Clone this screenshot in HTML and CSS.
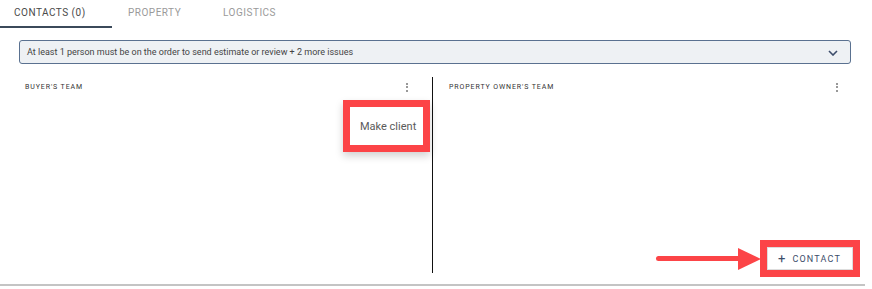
FILE: index.html
```html
<!DOCTYPE html>
<html lang="en">
<head>
    <meta charset="UTF-8">
    <meta name="viewport" content="width=device-width, initial-scale=1.0">
    <title>Order Contacts</title>
    <link rel="stylesheet" href="styles.css">
</head>
<body>
    <div id="order">
        <div class="tabs">
            <div class="tab tab-active">CONTACTS (0)</div>
            <div class="tab">PROPERTY</div>
            <div class="tab">LOGISTICS</div>
        </div>

        <div class="banner">
            <span>At least 1 person must be on the order to send estimate or review + 2 more issues</span>
            <svg class="chevron" width="10" height="6" viewBox="0 0 10 6">
                <path d="M1 1 L5 5 L9 1" fill="none" stroke="#3d4d6b" stroke-width="1.6"/>
            </svg>
        </div>

        <div class="teams">
            <div class="team team-buyer">
                <div class="team-head">
                    <span class="team-title">BUYER'S TEAM</span>
                    <span class="kebab"><i></i><i></i><i></i></span>
                </div>
                <div class="menu-mark">
                    <div class="menu">Make client</div>
                </div>
            </div>
            <div class="team team-owner">
                <div class="team-head">
                    <span class="team-title">PROPERTY OWNER'S TEAM</span>
                    <span class="kebab"><i></i><i></i><i></i></span>
                </div>
                <div class="team-foot">
                    <div class="arrow"><span class="arrow-line"></span><span class="arrow-head"></span></div>
                    <div class="btn-mark">
                        <button class="add-btn"><span class="plus">+</span>CONTACT</button>
                    </div>
                </div>
            </div>
        </div>

        <div class="bottom-line"></div>
    </div>
</body>
</html>
```

FILE: styles.css
```css
body {
    margin: 0;
    font-family: Roboto, "Liberation Sans", Arial, sans-serif;
    background-color: #fff;
}
#order {
    width: 872px;
    height: 289px;
    overflow: hidden;
}
.tabs {
    display: flex;
    height: 28px;
}
.tab {
    box-sizing: border-box;
    height: 28px;
    padding-top: 7px;
    font-size: 10px;
    letter-spacing: 0.5px;
    color: #9a9a9a;
}
.tab:nth-child(1) {
    width: 112px;
    padding-left: 14px;
}
.tab:nth-child(2) {
    width: 95px;
    padding-left: 16px;
}
.tab:nth-child(3) {
    padding-left: 16px;
}
.tab-active {
    color: #4a4a4a;
    border-bottom: 2px solid #3b4a5a;
}
.banner {
    display: flex;
    align-items: center;
    justify-content: space-between;
    box-sizing: border-box;
    height: 24px;
    margin: 12px 21px 0 19px;
    padding: 0 12px 0 7px;
    background-color: #eef1f4;
    border: 1px solid #5a7190;
    border-radius: 3px;
    font-size: 9px;
    color: #444;
}
.chevron {
    margin-top: 1px;
}
.teams {
    display: flex;
    height: 196px;
    margin-top: 13px;
}
.team {
    display: flex;
    flex-direction: column;
    position: relative;
}
.team-buyer {
    width: 432px;
    border-right: 1px solid #111;
}
.team-owner {
    flex: 1;
}
.team-head {
    display: flex;
    justify-content: space-between;
    align-items: center;
    height: 18px;
    padding-top: 1px;
}
.team-buyer .team-head {
    padding-left: 25px;
    padding-right: 24px;
}
.team-owner .team-head {
    padding-left: 16px;
    padding-right: 34px;
}
.team-title {
    font-size: 7px;
    letter-spacing: 0.9px;
    color: #333;
}
.kebab {
    display: flex;
    flex-direction: column;
    gap: 1.5px;
}
.kebab i {
    display: block;
    width: 2px;
    height: 2px;
    border-radius: 1px;
    background-color: #777;
}
.menu-mark {
    position: absolute;
    top: 23px;
    left: 343px;
    width: 73px;
    height: 38px;
    border: 7px solid #fc4447;
    box-shadow: 0 4px 8px rgba(0, 0, 0, 0.18);
    background: #fff;
}
.menu {
    padding: 13px 0 0 10px;
    font-size: 11px;
    color: #5a5a5a;
}
.team-foot {
    display: flex;
    align-items: center;
    justify-content: flex-end;
    margin-top: auto;
    padding-right: 12px;
    margin-bottom: -4px;
}
.arrow {
    display: flex;
    align-items: center;
    margin-right: -1px;
}
.arrow-line {
    display: block;
    width: 86px;
    height: 5px;
    border-radius: 3px;
    background-color: #fc4447;
}
.arrow-head {
    display: block;
    width: 0;
    height: 0;
    margin-left: -4px;
    border-top: 11px solid transparent;
    border-bottom: 11px solid transparent;
    border-left: 23px solid #fc4447;
}
.btn-mark {
    border: 7px solid #fc4447;
    background: #fff;
}
.add-btn {
    display: flex;
    align-items: center;
    box-sizing: border-box;
    width: 86px;
    height: 23px;
    padding: 0 0 0 10px;
    border: 1px solid #ddd;
    background: #fff;
    font-family: Roboto, "Liberation Sans", Arial, sans-serif;
    font-size: 9px;
    letter-spacing: 1.2px;
    color: #3d4d6b;
}
.plus {
    font-size: 13px;
    margin-right: 7px;
    letter-spacing: 0;
}
.bottom-line {
    margin-top: 11px;
    margin-right: 7px;
    border-top: 2px solid #c4c4c4;
}
```
